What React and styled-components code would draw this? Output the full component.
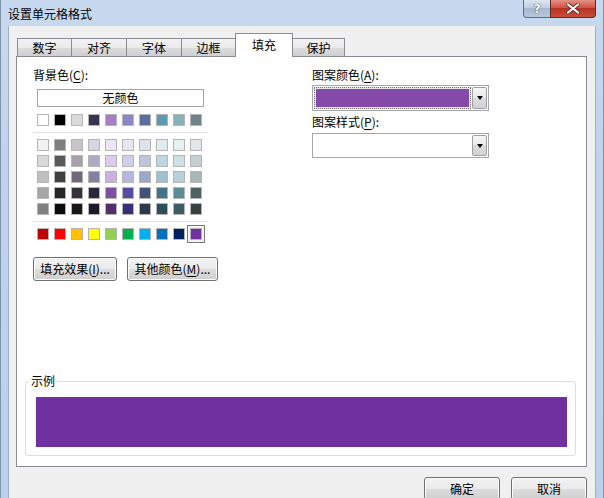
import styled, { createGlobalStyle } from "styled-components";

const GlobalStyle = createGlobalStyle`
  html, body { margin: 0; padding: 0; }
  body {
    width: 604px;
    height: 498px;
    overflow: hidden;
    background: #fff;
    font-family: "Noto Sans CJK SC", "Microsoft YaHei", sans-serif;
    font-size: 12px;
    color: #1a1a1a;
  }
  * { box-sizing: border-box; }
`;

const themeRow = ["#ffffff", "#000000", "#dcd9dc", "#37354e", "#a97dc6", "#8a87c9", "#5a6d9e", "#5f9ab4", "#85b2bb", "#6e8687"];

const shades = [
  ["#f2f2f2", "#7f7f7f", "#c9c4cb", "#d7d6e2", "#ede5f4", "#e8e6f4", "#dee2ec", "#dfebf0", "#e6eff1", "#e2e7e7"],
  ["#d9d9d9", "#595959", "#a8a0aa", "#acaac4", "#ddcbe9", "#d0cfe9", "#bdc5d8", "#bed6e1", "#cde0e3", "#c5cfcf"],
  ["#bfbfbf", "#404040", "#726879", "#8381a0", "#cbb1de", "#b8b6de", "#9ca8c5", "#9fc2d2", "#b5d0d6", "#a8b6b7"],
  ["#a6a6a6", "#262626", "#35303a", "#29283a", "#7f4fa2", "#564ba8", "#445275", "#427388", "#5a8b96", "#51615f"],
  ["#808080", "#0d0d0d", "#18161a", "#1b1b27", "#552f6c", "#372f7a", "#2d374f", "#2c4d5a", "#3c5d64", "#37413f"],
];

const standard = ["#c00000", "#ff0000", "#ffc000", "#ffff00", "#92d050", "#00b050", "#00b0f0", "#0070c0", "#002060", "#7030a0"];

const tabs = [
  { label: "数字", width: 55 },
  { label: "对齐", width: 56 },
  { label: "字体", width: 56 },
  { label: "边框", width: 55 },
  { label: "填充", width: 58, active: true },
  { label: "保护", width: 53 },
];

export default function App() {
  return (
    <>
      <GlobalStyle />
      <Window>
        <TitleBar>
          <Title>设置单元格格式</Title>
          <HelpButton>?</HelpButton>
          <CloseButton>
            <svg width="14" height="11" viewBox="0 0 14 11">
              <path d="M2 1.5 L12 9.5 M12 1.5 L2 9.5" stroke="#5a2a24" strokeWidth="3.6" strokeLinecap="round" />
              <path d="M2 1.5 L12 9.5 M12 1.5 L2 9.5" stroke="#ffffff" strokeWidth="2.2" strokeLinecap="round" />
            </svg>
          </CloseButton>
        </TitleBar>

        <Client>
          <TabStrip>
            {tabs.map((t) => (
              <Tab key={t.label} $width={t.width} $active={t.active}>
                {t.label}
              </Tab>
            ))}
          </TabStrip>

          <Panel>
            <TopSection>
              <LeftCol>
                <Label>
                  背景色(<u>C</u>):
                </Label>
                <NoColorButton>无颜色</NoColorButton>
                <SwatchGrid $top={7}>
                  {themeRow.map((c, i) => (
                    <Swatch key={i} $color={c} />
                  ))}
                </SwatchGrid>
                <Separator />
                <SwatchGrid $top={6}>
                  {shades.flat().map((c, i) => (
                    <Swatch key={i} $color={c} />
                  ))}
                </SwatchGrid>
                <Separator />
                <SwatchGrid $top={6}>
                  {standard.map((c, i) => (
                    <Swatch key={i} $color={c} $selected={i === standard.length - 1} />
                  ))}
                </SwatchGrid>
                <ButtonRow>
                  <PushButton $width={84}>
                    填充效果(<u>I</u>)...
                  </PushButton>
                  <PushButton $width={91}>
                    其他颜色(<u>M</u>)...
                  </PushButton>
                </ButtonRow>
              </LeftCol>

              <RightCol>
                <Label>
                  图案颜色(<u>A</u>):
                </Label>
                <Combo $top={2} $height={26}>
                  <ComboValue>
                    <FocusBox>
                      <ColorFill $color="#8549aa" />
                    </FocusBox>
                  </ComboValue>
                  <DropButton>
                    <Arrow />
                  </DropButton>
                </Combo>
                <Label $top={3}>
                  图案样式(<u>P</u>):
                </Label>
                <Combo $top={3} $height={25}>
                  <ComboValue />
                  <DropButton>
                    <Arrow />
                  </DropButton>
                </Combo>
              </RightCol>
            </TopSection>

            <Group>
              <Legend>示例</Legend>
              <Sample />
            </Group>
          </Panel>

          <Footer>
            <DialogButton>确定</DialogButton>
            <DialogButton>取消</DialogButton>
          </Footer>
        </Client>
      </Window>
    </>
  );
}

const Window = styled.div`
  width: 604px;
  height: 498px;
  display: flex;
  flex-direction: column;
  overflow: hidden;
  background: linear-gradient(to bottom, #c6d9ef, #bfd4ec 30%, #bbd1ea);
  border-left: 1px solid #7f93ab;
  border-right: 1px solid #7f93ab;
`;

const TitleBar = styled.div`
  height: 26px;
  flex: none;
  display: flex;
  align-items: flex-start;
  padding: 0 7px 0 7px;
`;

const Title = styled.div`
  margin-top: 6px;
  margin-right: auto;
  line-height: 16px;
  font-size: 12px;
  color: #000;
`;

const CaptionButton = styled.div`
  flex: none;
  height: 18px;
  display: flex;
  align-items: center;
  justify-content: center;
  border-style: solid;
  border-width: 0 1px 1px 1px;
`;

const HelpButton = styled(CaptionButton)`
  width: 27px;
  border-color: #5d6e84;
  border-right-width: 0;
  border-radius: 0 0 0 4px;
  background: linear-gradient(#dbe4ef, #c0cfe1 45%, #a5b8cf 50%, #b8c8db);
  font-family: "DejaVu Sans", sans-serif;
  font-weight: bold;
  font-size: 13px;
  color: #f6f8fb;
  text-shadow: 0 0 1px #2c3e56, 0 0 1px #2c3e56;
`;

const CloseButton = styled(CaptionButton)`
  width: 46px;
  border-color: #5e2a22;
  border-radius: 0 0 4px 0;
  background: #c8453a linear-gradient(#e39282, #cf5444 45%, #b93222 50%, #c94d3b);
`;

const Client = styled.div`
  flex: 1;
  min-height: 0;
  margin: 0 7px 0 7px;
  background: #f0f0f0;
  padding: 7px 8px 0 7px;
  display: flex;
  flex-direction: column;
  border-left: 1px solid #9fb0c3;
  border-right: 1px solid #9fb0c3;
`;

const TabStrip = styled.div`
  height: 24px;
  flex: none;
  display: flex;
  align-items: flex-end;
  padding-left: 1px;
  margin-bottom: -1px;
  position: relative;
  z-index: 1;
`;

const Tab = styled.div`
  width: ${(p) => p.$width}px;
  height: ${(p) => (p.$active ? 24 : 19)}px;
  margin-left: -1px;
  border: 1px solid #898c95;
  border-bottom: ${(p) => (p.$active ? "none" : "1px solid #898c95")};
  background: ${(p) =>
    p.$active
      ? "#ffffff"
      : "linear-gradient(to bottom, #f2f2f2, #ebebeb 50%, #dddddd 50%, #cfcfcf)"};
  display: flex;
  align-items: ${(p) => (p.$active ? "flex-start" : "center")};
  padding-top: ${(p) => (p.$active ? 3 : 0)}px;
  justify-content: center;
  line-height: 16px;
  color: #000;
  position: relative;
  z-index: ${(p) => (p.$active ? 2 : 1)};
  &:first-child {
    margin-left: 0;
  }
`;

const Panel = styled.div`
  flex: 1;
  min-height: 0;
  background: #fff;
  border: 1px solid #898c95;
  display: flex;
  flex-direction: column;
  padding: 0 10px 10px 8px;
`;

const TopSection = styled.div`
  display: flex;
  padding: 10px 0 0 8px;
`;

const LeftCol = styled.div`
  width: 279px;
  display: flex;
  flex-direction: column;
  align-items: flex-start;
`;

const RightCol = styled.div`
  width: 177px;
  display: flex;
  flex-direction: column;
`;

const Label = styled.div`
  line-height: 16px;
  color: #000;
  margin-top: ${(p) => p.$top || 0}px;
  u {
    text-decoration-thickness: 1px;
    text-underline-offset: 2px;
  }
`;

const NoColorButton = styled.div`
  margin: 6px 0 0 4px;
  width: 167px;
  height: 18px;
  border: 1px solid #a3a3a3;
  background: #fff;
  display: flex;
  align-items: center;
  justify-content: center;
  line-height: 16px;
  color: #000;
`;

const SwatchGrid = styled.div`
  margin: ${(p) => p.$top}px 0 0 4px;
  display: grid;
  grid-template-columns: repeat(10, 12px);
  grid-auto-rows: 12px;
  column-gap: 5px;
  row-gap: 4px;
`;

const Swatch = styled.div`
  width: 12px;
  height: 12px;
  background: ${(p) => p.$color};
  border: 1px solid #b5b5b5;
  box-shadow: ${(p) => (p.$selected ? "0 0 0 2px #f4f4f4, 0 0 0 3px #7a7a7a" : "none")};
`;

const Separator = styled.div`
  margin: 6px 0 0 0;
  width: 175px;
  height: 1px;
  background: #e2e2e2;
`;

const ButtonRow = styled.div`
  margin-top: 17px;
  display: flex;
  gap: 10px;
`;

const PushButton = styled.div`
  width: ${(p) => p.$width}px;
  height: 24px;
  border: 1px solid #707070;
  border-radius: 3px;
  background: linear-gradient(to bottom, #f2f2f2, #ebebeb 50%, #dddddd 50%, #cfcfcf);
  box-shadow: inset 0 0 0 1px #fcfcfc;
  display: flex;
  align-items: center;
  justify-content: center;
  line-height: 16px;
  color: #000;
  u {
    text-underline-offset: 2px;
  }
`;

const Combo = styled.div`
  margin-top: ${(p) => p.$top}px;
  height: ${(p) => p.$height}px;
  width: 177px;
  border: 1px solid #a5a7ad;
  background: #fff;
  display: flex;
  padding: 1px;
`;

const ComboValue = styled.div`
  flex: 1;
  display: flex;
  padding: 0 1px 0 0;
`;

const FocusBox = styled.div`
  flex: 1;
  display: flex;
  padding: 1px;
  border: 1px dotted #6f6f6f;
  background: #e6e6e6;
`;

const ColorFill = styled.div`
  flex: 1;
  background: ${(p) => p.$color};
`;

const DropButton = styled.div`
  width: 15px;
  border: 1px solid #a0a0a0;
  border-radius: 2px;
  background: linear-gradient(to bottom, #f6f6f6, #e9e9e9 50%, #dcdcdc 50%, #d2d2d2);
  display: flex;
  align-items: center;
  justify-content: center;
`;

const Arrow = styled.div`
  width: 0;
  height: 0;
  border-left: 3.5px solid transparent;
  border-right: 3.5px solid transparent;
  border-top: 4px solid #000;
`;

const Group = styled.fieldset`
  margin: auto 0 0 0;
  padding: 0 8px 8px 10px;
  border: 1px solid #d5dfe5;
  border-radius: 3px;
  min-width: 0;
`;

const Legend = styled.legend`
  padding: 0 2px;
  margin-left: -7px;
  line-height: 16px;
  color: #000;
`;

const Sample = styled.div`
  margin-top: 8px;
  height: 50px;
  background: #7030a0;
`;

const Footer = styled.div`
  height: 31px;
  flex: none;
  display: flex;
  justify-content: flex-end;
  align-items: flex-start;
  gap: 11px;
  padding-top: 10px;
`;

const DialogButton = styled.div`
  width: 76px;
  height: 23px;
  flex: none;
  border: 1px solid #707070;
  border-radius: 3px;
  background: linear-gradient(to bottom, #f2f2f2, #ebebeb 50%, #dddddd 50%, #cfcfcf);
  box-shadow: inset 0 0 0 1px #fcfcfc;
  display: flex;
  align-items: center;
  justify-content: center;
  line-height: 16px;
  color: #000;
`;
